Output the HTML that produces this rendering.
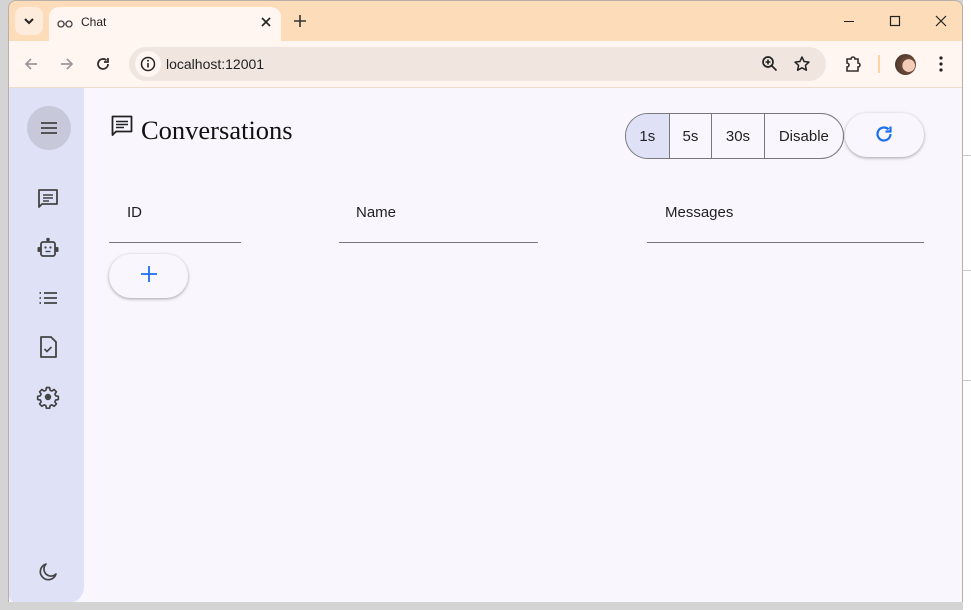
<!DOCTYPE html>
<html><head><meta charset="utf-8"><style>
*{box-sizing:border-box;margin:0;padding:0}
body{width:971px;height:610px;background:#d4d4d4;position:relative;overflow:hidden;font-family:"Liberation Sans",Arial,sans-serif}
.rightbg{position:absolute;left:963px;top:0;width:8px;height:610px;background:#fff}
.rl{position:absolute;left:963px;width:8px;height:1px;background:#ccc}
.win{position:absolute;left:8px;top:0;width:955px;height:602px;background:#fddcb9;border-radius:8px 8px 0 0;overflow:hidden;border:1px solid #b8b0a8;border-bottom:none}
.tab{position:absolute;left:40px;top:6px;width:232px;height:34px;background:#fff6f1;border-radius:10px 10px 0 0}
.tabdd{position:absolute;left:6px;top:6px;width:28px;height:28px;background:#fdebdc;border-radius:8px}
.tool{position:absolute;left:0;top:40px;width:955px;height:47px;background:#fff6f1;border-bottom:1px solid #f0dcc8}
.omni{position:absolute;left:120px;top:6px;width:697px;height:34px;background:#f0e6df;border-radius:17px}
.side{position:absolute;left:0;top:87px;width:75px;height:515px;background:#dfe1f7;border-radius:0 0 16px 8px}
.content{position:absolute;left:0;top:87px;width:955px;height:515px;background:#f9f7fd}
.ico{position:absolute}
svg{display:block}
.t{position:absolute;font-size:15px;color:#1f1f1f}
.seg{position:absolute;left:625px;top:113px;width:219px;height:46px;border:1px solid #79767d;border-radius:23px;overflow:hidden;display:flex}
.seg div{height:100%;display:flex;align-items:center;justify-content:center;font-size:15px;color:#222;border-right:1px solid #79767d}
.pill{position:absolute;background:#f9f7fd;border-radius:23px;box-shadow:0 1px 3px rgba(0,0,0,.35)}
.line{position:absolute;height:1px;background:#79767d;top:242px}
</style></head><body>
<div class="rightbg"></div>
<div class="rl" style="top:155px"></div><div class="rl" style="top:270px"></div><div class="rl" style="top:380px"></div>
<div class="win">
 <div class="tabdd"><svg width="28" height="28"><path d="M10 12l4 4 4-4" fill="none" stroke="#222" stroke-width="2"/></svg></div>
 <div class="tab">
  <svg class="ico" style="left:8px;top:10px" width="16" height="14"><circle cx="4" cy="7" r="3" fill="none" stroke="#444" stroke-width="1.3"/><circle cx="12" cy="7" r="3" fill="none" stroke="#444" stroke-width="1.3"/><path d="M7 7h2" stroke="#444"/></svg>
  <div class="t" style="left:32px;top:8px;font-size:12px">Chat</div>
  <svg class="ico" style="left:210px;top:8px" width="14" height="14"><path d="M3 3l8 8M11 3l-8 8" stroke="#222" stroke-width="1.6"/></svg>
 </div>
 <svg class="ico" style="left:284px;top:13px" width="14" height="14"><path d="M7 1v12M1 7h12" stroke="#333" stroke-width="1.6"/></svg>
 <svg class="ico" style="left:833px;top:14px" width="14" height="14"><path d="M2 6.5h10" stroke="#222"/></svg>
 <svg class="ico" style="left:879px;top:13px" width="14" height="14"><rect x="2.5" y="2.5" width="9" height="9" fill="none" stroke="#222" stroke-width="1.2"/></svg>
 <svg class="ico" style="left:925px;top:13px" width="14" height="14"><path d="M2 2l10 10M12 2l-10 10" stroke="#222" stroke-width="1.2"/></svg>
 <div class="tool">
  <svg class="ico" style="left:14px;top:15px" width="16" height="16"><path d="M14 8H3M8 3L3 8l5 5" fill="none" stroke="#999" stroke-width="1.7"/></svg>
  <svg class="ico" style="left:50px;top:15px" width="16" height="16"><path d="M2 8h11M8 3l5 5-5 5" fill="none" stroke="#999" stroke-width="1.7"/></svg>
  <svg class="ico" style="left:86px;top:15px" width="16" height="16"><path d="M13 8a5 5 0 1 1-1.5-3.6" fill="none" stroke="#3a2e26" stroke-width="1.8"/><path d="M13 2v4h-4" fill="none" stroke="#3a2e26" stroke-width="1.8"/></svg>
  <div class="omni">
   <div style="position:absolute;left:6px;top:4px;width:26px;height:26px;border-radius:13px;background:#fff6f1"></div>
   <svg class="ico" style="left:11px;top:9px" width="16" height="16"><circle cx="8" cy="8" r="6.5" fill="none" stroke="#222" stroke-width="1.5"/><path d="M8 7v4.5" stroke="#222" stroke-width="1.6"/><circle cx="8" cy="4.8" r="1" fill="#222"/></svg>
   <div class="t" style="left:37px;top:9px;font-size:14px;color:#222">localhost:12001</div>
   <svg class="ico" style="left:632px;top:8px" width="18" height="18"><circle cx="7" cy="7" r="5" fill="none" stroke="#222" stroke-width="1.7"/><path d="M10.5 10.5l5 5M7 4.5v5M4.5 7h5" stroke="#222" stroke-width="1.6"/></svg>
   <svg class="ico" style="left:664px;top:8px" width="18" height="18"><path d="M9 2l2.1 4.5 4.9.6-3.6 3.3 1 4.8L9 12.8 4.6 15.2l1-4.8L2 7.1l4.9-.6z" fill="none" stroke="#222" stroke-width="1.5" stroke-linejoin="round"/></svg>
  </div>
  <svg class="ico" style="left:834px;top:13px" width="20" height="20"><path d="M4 5h4a2 2 0 0 1 4 0h3v4a2 2 0 0 1 0 4v4H4v-4a2 2 0 0 0 0-4z" fill="none" stroke="#3a2e26" stroke-width="1.6"/></svg>
  <div style="position:absolute;left:869px;top:14px;width:2px;height:18px;background:#fbd4a8"></div>
  <div style="position:absolute;left:886px;top:13px;width:21px;height:21px;border-radius:50%;background:radial-gradient(circle at 65% 55%,#f3cdb8 0 35%,#6b4a3a 36%,#3a2a22)"></div>
  <svg class="ico" style="left:922px;top:13px" width="20" height="20"><circle cx="10" cy="4" r="1.6" fill="#222"/><circle cx="10" cy="10" r="1.6" fill="#222"/><circle cx="10" cy="16" r="1.6" fill="#222"/></svg>
 </div>
 <div class="content"></div>
 <div class="side">
  <div style="position:absolute;left:18px;top:18px;width:44px;height:44px;border-radius:22px;background:#c7c8da"></div>
  <svg class="ico" style="left:28px;top:28px" width="24" height="24"><path d="M4 7h16M4 12h16M4 17h16" stroke="#444" stroke-width="1.8"/></svg>
  <svg class="ico" style="left:27px;top:99px" width="24" height="24"><path d="M3 3h18v14H6l-3 3z" fill="none" stroke="#444" stroke-width="1.8" stroke-linejoin="round"/><path d="M7 8h10M7 11h10M7 14h6" stroke="#444" stroke-width="1.6"/></svg>
  <svg class="ico" style="left:27px;top:148px" width="24" height="24"><rect x="5" y="6" width="14" height="14" rx="2" fill="none" stroke="#444" stroke-width="1.8"/><circle cx="12" cy="3.5" r="1.8" fill="#444"/><path d="M12 4v2" stroke="#444" stroke-width="1.6"/><rect x="1.5" y="11" width="3" height="5" rx="1" fill="#444"/><rect x="19.5" y="11" width="3" height="5" rx="1" fill="#444"/><circle cx="9.5" cy="11.5" r="1.1" fill="#444"/><circle cx="14.5" cy="11.5" r="1.1" fill="#444"/><path d="M9.5 15.5h5" stroke="#444" stroke-width="1.4"/></svg>
  <svg class="ico" style="left:27px;top:198px" width="24" height="24"><path d="M8 7h13M8 12h13M8 17h13" stroke="#444" stroke-width="1.8"/><path d="M3.5 7h1.5M3.5 12h1.5M3.5 17h1.5" stroke="#444" stroke-width="1.8"/></svg>
  <svg class="ico" style="left:27px;top:247px" width="24" height="24"><path d="M5 2h10l5 5v15H5z" fill="none" stroke="#444" stroke-width="1.8" stroke-linejoin="round"/><path d="M8.5 14l2.5 2.5 4.5-4.5" fill="none" stroke="#444" stroke-width="1.6"/></svg>
  <svg class="ico" style="left:27px;top:297px" width="24" height="24"><path d="M12 2.5l1.6.1.5 2.6 1.8.8 2.2-1.5 2.3 2.3-1.5 2.2.8 1.8 2.6.5v3.2l-2.6.5-.8 1.8 1.5 2.2-2.3 2.3-2.2-1.5-1.8.8-.5 2.6h-3.2l-.5-2.6-1.8-.8-2.2 1.5-2.3-2.3 1.5-2.2-.8-1.8-2.6-.5v-3.2l2.6-.5.8-1.8-1.5-2.2 2.3-2.3 2.2 1.5 1.8-.8.5-2.6z" fill="none" stroke="#444" stroke-width="1.7" stroke-linejoin="round"/><circle cx="12" cy="12" r="3.2" fill="#444"/></svg>
  <svg class="ico" style="left:27px;top:472px" width="24" height="24"><path d="M10 4a8 8 0 1 0 10 10 6.5 6.5 0 0 1-10-10z" fill="none" stroke="#444" stroke-width="1.7" stroke-linejoin="round"/></svg>
 </div>
</div>
<svg class="ico" style="left:110px;top:114px" width="24" height="24"><path d="M2.5 2.5h19v15H6l-3.5 3.5z" fill="none" stroke="#222" stroke-width="1.8" stroke-linejoin="round"/><path d="M6 7.5h12M6 10.5h12M6 13.5h8" stroke="#222" stroke-width="1.6"/></svg>
<div class="t" style="left:141px;top:115px;font-family:'Liberation Serif',serif;font-size:26.5px;color:#111">Conversations</div>
<div class="seg">
 <div style="width:44px;background:#dfe1f7">1s</div>
 <div style="width:43px">5s</div>
 <div style="width:53px">30s</div>
 <div style="width:79px;border-right:none">Disable</div>
</div>
<div class="pill" style="left:845px;top:113px;width:79px;height:44px"></div>
<svg class="ico" style="left:873px;top:123px" width="22" height="22"><path d="M17.5 11a6.5 6.5 0 1 1-2-4.7" fill="none" stroke="#1a6ef0" stroke-width="2.2"/><path d="M17.5 3.5v5h-5" fill="none" stroke="#1a6ef0" stroke-width="2.2"/></svg>
<div class="t" style="left:127px;top:204px">ID</div>
<div class="t" style="left:356px;top:204px">Name</div>
<div class="t" style="left:665px;top:204px">Messages</div>
<div class="line" style="left:109px;width:132px"></div>
<div class="line" style="left:339px;width:199px"></div>
<div class="line" style="left:647px;width:277px"></div>
<div class="pill" style="left:109px;top:254px;width:79px;height:44px"></div>
<svg class="ico" style="left:139px;top:264px" width="20" height="20"><path d="M10 2v16M2 10h16" stroke="#1a6ef0" stroke-width="1.8"/></svg>
</body></html>
